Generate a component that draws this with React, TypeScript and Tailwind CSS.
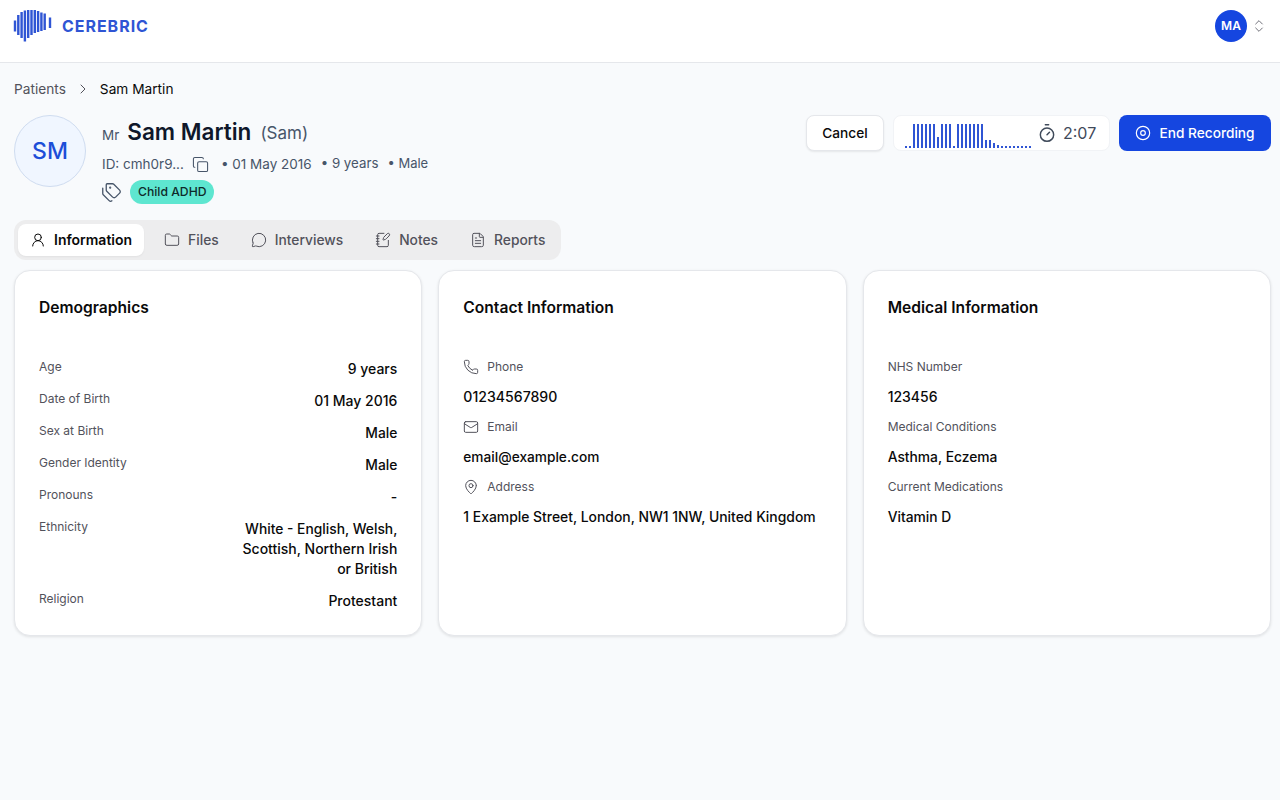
import React from "react";
import { ChevronRight, ChevronsUpDown, Copy, Tags, Timer, UserRound, Folder, MessageCircle, NotebookPen, FileText, Phone, Mail, MapPin } from "lucide-react";

const logoBars: [number, number, number][] = [
  [15, 20.5, 31.5], [18.3, 15, 35], [21.6, 12, 38], [24.9, 10.5, 41.5], [28.2, 10, 38], [31.5, 10, 35], [34.8, 10, 33],
  [38.1, 11, 32], [41.4, 12.5, 31], [44.7, 13.5, 30], [50, 17.5, 28],
];

const wave = [2, 2, 24, 24, 24, 24, 24, 24, 11, 24, 24, 24, 2, 24, 24, 24, 24, 24, 24, 24, 8, 8, 5, 3, 2, 2, 2, 2, 2, 2, 2, 2];

const tabs = [
  { label: "Information", Icon: UserRound, active: true },
  { label: "Files", Icon: Folder },
  { label: "Interviews", Icon: MessageCircle },
  { label: "Notes", Icon: NotebookPen },
  { label: "Reports", Icon: FileText },
];

const demographics: [string, React.ReactNode, string][] = [
  ["Age", "9 years", "text-sm"],
  ["Date of Birth", "01 May 2016", "text-sm"],
  ["Sex at Birth", "Male", "text-[13.8px]"],
  ["Gender Identity", "Male", "text-[13.8px]"],
  ["Pronouns", "-", "text-sm"],
  ["Ethnicity", <>White - English, Welsh,<br /><span className="text-[14px]">Scottish, Northern Irish</span><br /><span className="text-[14px]">or British</span></>, "text-[13.8px]"],
  ["Religion", "Protestant", "text-sm"],
];

const contact = [
  { label: "Phone", value: "01234567890", Icon: Phone, size: "text-[14.1px]" },
  { label: "Email", value: "email@example.com", Icon: Mail, size: "text-[13.7px]" },
  { label: "Address", value: "1 Example Street, London, NW1 1NW, United Kingdom", Icon: MapPin, size: "text-[13.9px]" },
];

const medical = [
  { label: "NHS Number", value: "123456", size: "text-sm" },
  { label: "Medical Conditions", value: "Asthma, Eczema", size: "text-[13.8px]" },
  { label: "Current Medications", value: "Vitamin D", size: "text-[13.8px]" },
];

function Card({ title, children }: { title: string; children: React.ReactNode }) {
  return (
    <div className="rounded-2xl border border-[#e5e7eb] bg-white p-6 shadow-[0_1px_3px_rgba(0,0,0,0.1)]">
      <h2 className="mb-[38px] text-[15.6px] leading-[26px] font-semibold text-[#0a0a0a]">{title}</h2>
      {children}
    </div>
  );
}

export default function App() {
  return (
    <div className="min-h-[800px] bg-[#f8fafc] font-['Inter',sans-serif] text-[#0a0a0a]">
      <header className="flex h-[63px] items-center justify-between border-b border-[#e5e7eb] bg-white pr-[13px] pl-[13px]">
        <div className="-mt-[10px] flex items-center">
          <svg width="40" height="34" viewBox="13 9 40 34" className="block">
            {logoBars.map(([x, y1, y2], i) => (
              <rect key={i} x={x - 1.2} y={y1} width="2.4" height={y2 - y1} fill="#2f55d4" />
            ))}
          </svg>
          <span className="ml-[9px] text-[16px] leading-6 font-bold tracking-[0.06em] text-[#2f55d4]">CEREBRIC</span>
        </div>
        <div className="-mt-[10px] flex items-center gap-1">
          <div className="flex h-8 w-8 items-center justify-center rounded-full bg-[#1546e0] text-xs font-semibold text-white">MA</div>
          <ChevronsUpDown className="h-4 w-4 text-[#71717a]" strokeWidth={1.5} />
        </div>
      </header>

      <main className="pt-4 pr-[9px] pl-[14px]">
        <nav className="flex items-center text-[13.7px] leading-5">
          <span className="text-[#52525b]">Patients</span>
          <ChevronRight className="mx-[9px] h-4 w-4 text-[#52525b]" strokeWidth={1.5} />
          <span className="text-[#0a0a0a]">Sam Martin</span>
        </nav>

        <section className="mt-4 flex items-start justify-between">
          <div className="flex gap-4">
            <div className="flex h-[72px] w-[72px] items-center justify-center rounded-full border border-[#cfdcf0] bg-[#f0f6ff] pt-[1px] text-[23px] font-medium text-[#1d4ed8]">SM</div>
            <div>
              <div className="flex h-9 items-center">
                <span className="mt-1 text-[13.5px] text-[#475569]">Mr</span>
                <span className="-mt-[2px] ml-2 text-[22.5px] font-semibold text-[#0f172a]">Sam Martin</span>
                <span className="mt-[2px] ml-[9px] text-[17px] text-[#475569]">(Sam)</span>
              </div>
              <div className="mt-[3px] flex h-5 items-center text-[13.5px] text-[#475569]">
                <span>ID: cmh0r9...</span>
                <Copy className="ml-[8px] h-[17px] w-[17px]" strokeWidth={1.5} />
                <span className="ml-[12px]">• 01 May 2016</span>
                <span className="ml-[9px] text-[13.3px]">• 9 years</span>
                <span className="ml-[9px] text-[13px]">• Male</span>
              </div>
              <div className="mt-[6px] flex h-6 items-center">
                <Tags className="-ml-px h-[21px] w-[21px] text-[#475569]" strokeWidth={1.5} />
                <span className="ml-[8px] flex h-6 items-center rounded-full bg-[#5ee6d0] pr-[7.5px] pl-2 text-[12.2px] font-medium text-[#0f2a2a]">Child ADHD</span>
              </div>
            </div>
          </div>
          <div className="flex items-start">
            <button className="flex h-9 w-[78px] items-center justify-center rounded-lg border border-[#e5e7eb] bg-white text-[13.7px] font-medium shadow-[0_1px_2px_rgba(0,0,0,0.08)]">Cancel</button>
            <div className="ml-[9px] flex h-9 w-[217px] items-center rounded-lg border border-[#f1f3f6] bg-white pl-[11px]">
              <div className="mt-[6px] flex h-6 items-end gap-[2px]">
                {wave.map((h, i) => (
                  <div key={i} className="w-[2px] bg-[#2f55d4]" style={{ height: h }} />
                ))}
              </div>
              <Timer className="ml-[6px] h-5 w-5 text-[#3f4a5a]" strokeWidth={1.75} />
              <span className="ml-[6px] text-base text-[#3f4a5a]">2:07</span>
            </div>
            <button className="ml-[9px] flex h-9 w-[152px] items-center justify-center gap-2 rounded-lg bg-[#1546e0] text-[13.7px] font-medium text-white">
              <svg width="16" height="16" viewBox="0 0 24 24" fill="none" stroke="currentColor" strokeWidth="1.75">
                <circle cx="12" cy="12" r="10" />
                <circle cx="12" cy="12" r="3.5" />
              </svg>
              End Recording
            </button>
          </div>
        </section>

        <div className="mt-4 inline-flex gap-2 rounded-xl bg-[#ededee] p-1">
          {tabs.map(({ label, Icon, active }) => (
            <div key={label} className={`flex h-8 items-center gap-2 rounded-lg px-3 ${active ? "bg-white text-sm font-semibold text-[#0a0a0a] shadow-[0_1px_2px_rgba(0,0,0,0.05)]" : "text-[13.8px] font-medium text-[#52525b]"}`}>
              <Icon className="h-4 w-4" strokeWidth={1.5} />
              {label}
            </div>
          ))}
        </div>

        <div className="mt-[10px] grid grid-cols-3 gap-4">
          <Card title="Demographics">
            <div className="flex flex-col gap-3">
              {demographics.map(([label, value, size]) => (
                <div key={label} className="flex items-start justify-between">
                  <span className="text-xs leading-4 text-[#52525b]">{label}</span>
                  <span className={`text-right leading-5 font-medium ${size}`}>{value}</span>
                </div>
              ))}
            </div>
          </Card>
          <Card title="Contact Information">
            <div className="flex flex-col gap-3">
              {contact.map(({ label, value, Icon, size }) => (
                <div key={label} className="flex flex-col gap-3">
                  <div className="flex h-4 items-center gap-2 text-xs text-[#52525b]">
                    <Icon className="h-4 w-4" strokeWidth={1.5} />
                    {label}
                  </div>
                  <div className={`leading-5 font-medium ${size}`}>{value}</div>
                </div>
              ))}
            </div>
          </Card>
          <Card title="Medical Information">
            <div className="flex flex-col gap-3">
              {medical.map(({ label, value, size }) => (
                <div key={label} className="flex flex-col gap-3">
                  <div className="h-4 text-xs leading-4 text-[#52525b]">{label}</div>
                  <div className={`leading-5 font-medium ${size}`}>{value}</div>
                </div>
              ))}
            </div>
          </Card>
        </div>
      </main>
    </div>
  );
}
